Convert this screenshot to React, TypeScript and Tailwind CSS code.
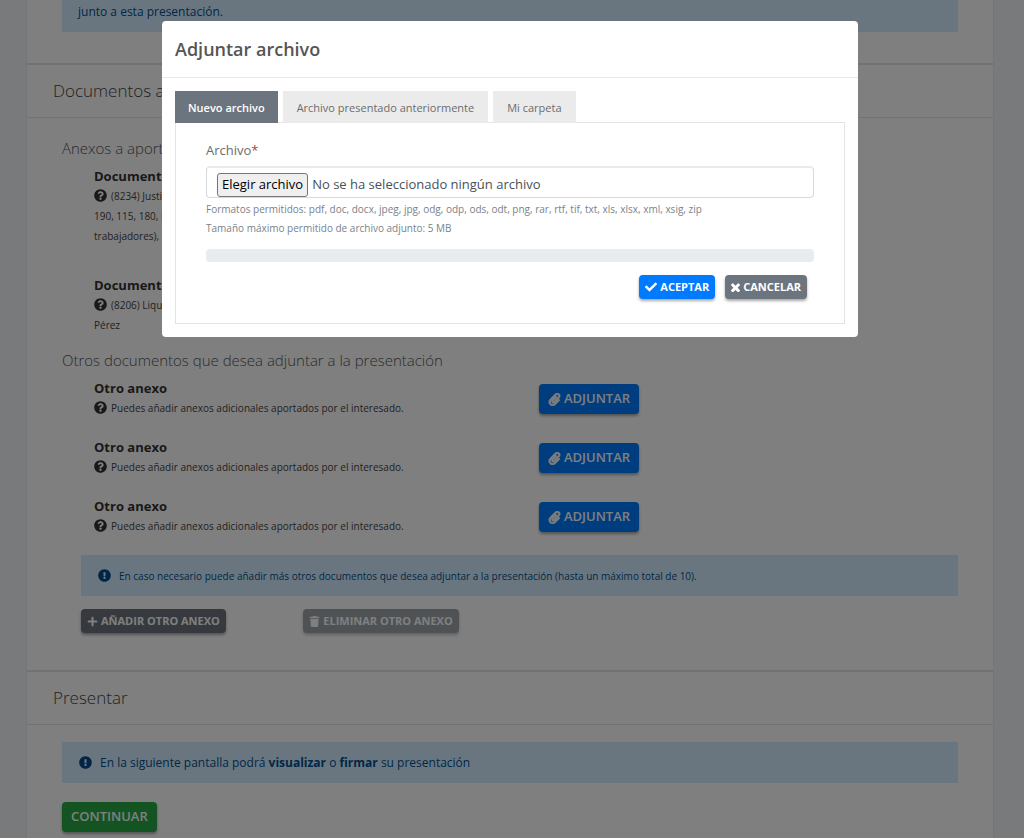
import { useState } from "react";
import type { ReactNode } from "react";
import {
  FaCheck,
  FaExclamationCircle,
  FaPaperclip,
  FaPlus,
  FaQuestionCircle,
  FaTrash,
} from "react-icons/fa";

const tabs = ["Nuevo archivo", "Archivo presentado anteriormente", "Mi carpeta"];

function CrossIcon() {
  return (
    <svg viewBox="302 324 1188 1188" fill="currentColor" className="size-[9px]" aria-hidden="true">
      <path d="M1490 1322q0 40-28 68l-136 136q-28 28-68 28t-68-28l-294-294-294 294q-28 28-68 28t-68-28l-136-136q-28-28-28-68t28-68l294-294-294-294q-28-28-28-68t28-68l136-136q28-28 68-28t68 28l294 294 294-294q28-28 68-28t68 28l136 136q28 28 28 68t-28 68l-294 294 294 294q28 28 28 68z" />
    </svg>
  );
}

function ClipIcon() {
  return (
    <FaPaperclip className="size-[13px]" stroke="currentColor" strokeWidth={24} />
  );
}

function SectionTitle({ children }: { children: ReactNode }) {
  return (
    <div className="border-t-2 border-b border-t-[#e0e4e8] border-b-[#e4e7ea] px-[26px] py-4">
      <h2 className="text-[17px] leading-5 font-light text-[#444444]">{children}</h2>
    </div>
  );
}

function Notice({ small = false, children }: { small?: boolean; children: ReactNode }) {
  return (
    <div className="flex h-[41px] items-center gap-2 bg-[#d5edff] px-[17px] text-[#00508f]">
      <FaExclamationCircle className="size-[13px] shrink-0 text-[#004a8c]" />
      <p className={small ? "text-[10px] leading-5" : "text-[12px] leading-5"}>{children}</p>
    </div>
  );
}

function Attachment({ title, lines, label }: { title: string; lines: string[]; label: string }) {
  return (
    <div className="grid grid-cols-2 pl-8">
      <div className="text-[#444444]">
        <h4 className="text-[13px] leading-5 font-bold text-[#333333]">{title}</h4>
        <p className="text-[10px] leading-5">
          <FaQuestionCircle className="mr-1 mb-[3px] inline size-[13px] text-[#333333]" />
          {lines.map((line) => (
            <span key={line}>
              {line}
              <br />
            </span>
          ))}
        </p>
      </div>
      <div className="pt-[6px] pl-[13px]">
        <button
          type="button"
          aria-label={label}
          className="flex h-[30px] items-center gap-[3px] rounded-[4px] bg-[#007bff] px-[9px] text-[13px] font-semibold text-white shadow-[0_2px_3px_rgba(0,0,0,0.35)]"
        >
          <ClipIcon />
          ADJUNTAR
        </button>
      </div>
    </div>
  );
}

const smallButton =
  "flex h-6 items-center gap-[3px] rounded-[4px] px-[6px] text-[11px] font-bold whitespace-nowrap text-white shadow-[0_2px_3px_rgba(0,0,0,0.35)]";

function AttachDialog() {
  const [tab, setTab] = useState(0);
  const [fileName, setFileName] = useState("");

  return (
    <div className="fixed inset-0 flex items-start justify-center bg-black/50 pt-[21px] pr-1">
      <div
        role="dialog"
        aria-modal="true"
        aria-labelledby="dialog-title"
        className="w-full max-w-[696px] rounded-[4px] bg-white pb-[13px]"
      >
        <div className="border-b border-[#e9e9e9] px-[13px] py-[14px]">
          <h1 id="dialog-title" className="text-[18px] leading-7 font-semibold text-[#555555]">
            Adjuntar archivo
          </h1>
        </div>
        <div className="px-[13px] pt-[13px]">
          <div role="tablist" className="relative flex gap-[5px]">
            {tabs.map((name, i) => (
              <button
                key={name}
                type="button"
                role="tab"
                aria-selected={tab === i}
                onClick={() => setTab(i)}
                className={
                  tab === i
                    ? "h-8 bg-[#6c757d] px-[13px] pt-[2px] text-[11px] leading-4 font-semibold text-white"
                    : "h-8 bg-[#ebebeb] px-[14px] pt-[2px] text-[11px] leading-4 text-[#6b6b6b]"
                }
              >
                {name}
              </button>
            ))}
          </div>
          <div role="tabpanel" className="-mt-px border border-[#e4e4e4] px-[30px] pt-[17px] pb-6">
            <label htmlFor="file" className="block text-[13px] leading-5 text-[#6c6c6c]">
              Archivo<span className="text-[#b04040]">*</span>
            </label>
            <label
              htmlFor="file"
              className="relative mt-[6px] flex h-8 items-end gap-1 rounded-[4px] border border-t-2 border-[#d5dade] border-t-[#e7ebee] pl-[10px] text-[13px] text-[#495057]"
            >
              <input
                id="file"
                type="file"
                className="sr-only"
                onChange={(e) => setFileName(e.target.files?.[0]?.name ?? "")}
              />
              <span className="flex h-6 items-center rounded-[3px] border border-[#767676] bg-[#efefef] px-1 text-black">
                Elegir archivo
              </span>
              <span className="flex h-6 items-center">
                {fileName || "No se ha seleccionado ningún archivo"}
              </span>
            </label>
            <p className="mt-[2px] text-[10px] leading-[19px] text-[#79828a]">
              Formatos permitidos: pdf, doc, docx, jpeg, jpg, odg, odp, ods, odt, png, rar, rtf, tif,
              txt, xls, xlsx, xml, xsig, zip
              <br />
              Tamaño máximo permitido de archivo adjunto: 5 MB
            </p>
            <div
              role="progressbar"
              aria-label="Progreso de la subida"
              aria-valuenow={0}
              className="mt-[11px] h-[13px] rounded-[4px] bg-[#e9ecef]"
            />
            <div className="mt-[13px] flex justify-end gap-[10px] pr-[7px]">
              <button type="button" className={`${smallButton} bg-[#007bff]`}>
                <FaCheck className="size-3" />
                ACEPTAR
              </button>
              <button type="button" className={`${smallButton} bg-[#6c757d]`}>
                <CrossIcon />
                CANCELAR
              </button>
            </div>
          </div>
        </div>
      </div>
    </div>
  );
}

export default function App() {
  return (
    <div className="flex min-h-screen flex-col bg-[#f3f5f8] pr-[30px] pl-[26px] font-['Open_Sans','Noto_Sans',sans-serif]">
      <main className="grow border-x border-[#e9ecef] bg-white pb-[6px]">
        <div className="mx-[35px] mb-[31px] h-8 bg-[#d5edff] px-4 pt-[2px] text-[12px] leading-5 text-[#00508f]">
          junto a esta presentación.
        </div>

        <SectionTitle>Documentos a aportar</SectionTitle>
        <section className="px-[35px] pt-[17px] pb-[37px]">
          <h3 className="text-[15px] leading-[26px] font-light text-[#555555]">
            Anexos a aportar
          </h3>
          <div className="mt-[5px] flex flex-col gap-[29px]">
            <Attachment
              title="Documentación"
              label="Adjuntar documentación 8234"
              lines={["(8234) Justificantes", "190, 115, 180, IRPF", "trabajadores), IVA"]}
            />
            <Attachment
              title="Documentación"
              label="Adjuntar documentación 8206"
              lines={["(8206) Liquidación", "Pérez"]}
            />
          </div>
          <h3 className="mt-[12px] text-[15px] leading-[26px] font-light text-[#555555]">
            Otros documentos que desea adjuntar a la presentación
          </h3>
          <div className="mt-[5px] flex flex-col gap-[19px]">
            {[1, 2, 3].map((n) => (
              <Attachment
                key={n}
                title="Otro anexo"
                label={`Adjuntar otro anexo ${n}`}
                lines={["Puedes añadir anexos adicionales aportados por el interesado."]}
              />
            ))}
          </div>
          <div className="mt-[19px] pl-[19px]">
            <Notice small>
              En caso necesario puede añadir más otros documentos que desea adjuntar a la
              presentación (hasta un máximo total de 10).
            </Notice>
            <div className="mt-[13px] grid grid-cols-4 gap-x-3">
              <div>
                <button type="button" className={`${smallButton} bg-[#6c757d]`}>
                  <FaPlus className="size-[11px]" />
                  AÑADIR OTRO ANEXO
                </button>
              </div>
              <div>
                <button type="button" disabled className={`${smallButton} bg-[#6c757d] opacity-65`}>
                  <FaTrash className="size-[11px]" />
                  ELIMINAR OTRO ANEXO
                </button>
              </div>
            </div>
          </div>
        </section>

        <SectionTitle>Presentar</SectionTitle>
        <section className="px-[35px] pt-[17px]">
          <Notice>
            En la siguiente pantalla podrá <strong className="font-bold">visualizar</strong> o{" "}
            <strong className="font-bold">firmar</strong> su presentación
          </Notice>
          <button
            type="button"
            className="mt-[19px] flex h-[30px] items-center rounded-[4px] bg-[#28a745] px-[9px] text-[13px] font-semibold text-white shadow-[0_2px_3px_rgba(0,0,0,0.35)]"
          >
            CONTINUAR
          </button>
        </section>
      </main>
      <AttachDialog />
    </div>
  );
}
